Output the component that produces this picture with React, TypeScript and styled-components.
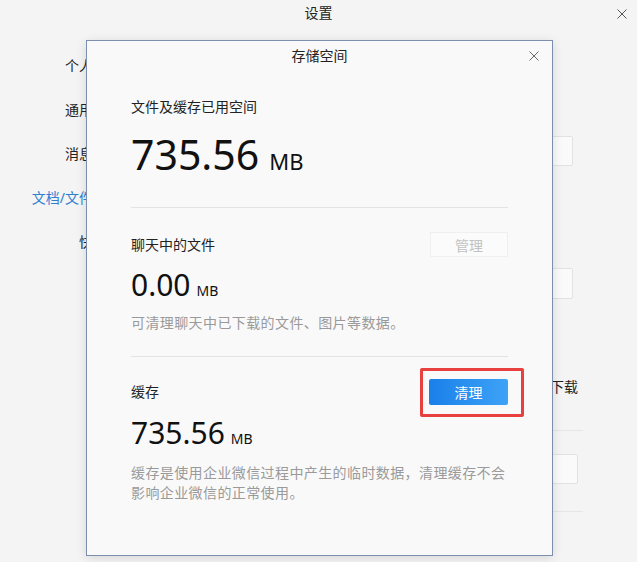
import styled, { createGlobalStyle } from "styled-components";

const GlobalStyle = createGlobalStyle`
  html, body {
    margin: 0;
    padding: 0;
    background: #f4f4f5;
  }
  body {
    font-family: "Noto Sans", "Noto Sans CJK SC", sans-serif;
    color: #222;
  }
`;

const Window = styled.div`
  position: relative;
  width: 637px;
  height: 562px;
  overflow: hidden;
  background: #f4f4f5;
  display: flex;
  flex-direction: column;
`;

const TitleBar = styled.div`
  position: relative;
  height: 27px;
  line-height: 26px;
  text-align: center;
  font-size: 14px;
  color: #222;
  flex-shrink: 0;
`;

const CloseButton = styled.span<{ $right: number }>`
  position: absolute;
  right: ${(p) => p.$right}px;
  top: 50%;
  width: 10px;
  height: 10px;
  margin-top: -5px;
  display: flex;
`;

const Body = styled.div`
  flex: 1;
  display: flex;
`;

const Nav = styled.ul`
  list-style: none;
  margin: 0;
  padding: 17px 0 0 0;
  width: 121px;
  flex-shrink: 0;
`;

const NavItem = styled.li<{ $active?: boolean }>`
  height: 44px;
  line-height: 44px;
  text-align: right;
  font-size: 14px;
  white-space: nowrap;
  color: ${(p) => (p.$active ? "#2f7fd0" : "#222")};
`;

const Main = styled.div`
  flex: 1;
  margin-right: 54px;
  display: flex;
  flex-direction: column;
`;

const SettingRow = styled.div<{ $top: number; $height: number; $inset: number }>`
  margin-top: ${(p) => p.$top}px;
  height: ${(p) => p.$height}px;
  padding-right: ${(p) => p.$inset}px;
  display: flex;
  align-items: center;
  justify-content: flex-end;
  font-size: 14px;
  color: #222;
`;

const OutlineButton = styled.span<{ $width: number }>`
  box-sizing: border-box;
  width: ${(p) => p.$width}px;
  height: 100%;
  border: 1px solid #e2e2e4;
  border-radius: 2px;
  background: #fafafa;
  display: flex;
  align-items: center;
  justify-content: center;
  font-size: 14px;
  color: #222;
`;

const LinkText = styled.span`
  color: #3b6fc2;
`;

const RowDivider = styled.div<{ $top: number }>`
  margin-top: ${(p) => p.$top}px;
  height: 1px;
  background: #e6e6e8;
`;

/* storage dialog */

const Modal = styled.div`
  position: absolute;
  left: 86px;
  top: 40px;
  width: 467px;
  height: 516px;
  box-sizing: border-box;
  border: 1px solid #7d8fae;
  background: #f9f9f9;
  box-shadow: 0 2px 10px rgba(0, 0, 0, 0.12);
  display: flex;
  flex-direction: column;
`;

const ModalHeader = styled.div`
  position: relative;
  height: 29px;
  line-height: 29px;
  text-align: center;
  font-size: 14px;
  color: #222;
`;

const ModalBody = styled.div`
  padding: 0 44px;
  display: flex;
  flex-direction: column;
`;

const Label = styled.div<{ $top?: number }>`
  margin-top: ${(p) => p.$top ?? 0}px;
  line-height: 20px;
  font-size: 14px;
  color: #222;
`;

const SectionHead = styled.div<{ $top: number; $height: number }>`
  margin-top: ${(p) => p.$top}px;
  height: ${(p) => p.$height}px;
  display: flex;
  align-items: center;
  justify-content: space-between;
`;

const Amount = styled.div<{ $size: number; $top: number }>`
  margin-top: ${(p) => p.$top}px;
  font-family: "Noto Sans", sans-serif;
  font-size: ${(p) => p.$size}px;
  line-height: ${(p) => p.$size}px;
  color: #111;
  white-space: nowrap;
`;

const Unit = styled.span<{ $size: number }>`
  font-size: ${(p) => p.$size}px;
  line-height: 1;
  margin-left: ${(p) => Math.round(p.$size * 0.45)}px;
`;

const Note = styled.div<{ $top: number }>`
  margin-top: ${(p) => p.$top}px;
  font-size: 14px;
  line-height: 20px;
  letter-spacing: 0.4px;
  color: #9a9a9a;
`;

const Divider = styled.div<{ $top: number }>`
  margin-top: ${(p) => p.$top}px;
  height: 1px;
  background: #e3e3e3;
`;

const GhostButton = styled.span`
  box-sizing: border-box;
  width: 78px;
  height: 25px;
  border: 1px solid #efefef;
  background: #fbfbfb;
  display: flex;
  align-items: center;
  justify-content: center;
  font-size: 14px;
  color: #c2c2c2;
`;

const ButtonWrap = styled.span`
  position: relative;
  display: flex;
`;

const PrimaryButton = styled.span`
  width: 79px;
  height: 26px;
  border-radius: 2px;
  background: linear-gradient(to right, #1a80ea, #3ea3f6);
  display: flex;
  align-items: center;
  justify-content: center;
  font-size: 14px;
  color: #fff;
`;

const Highlight = styled.span`
  position: absolute;
  left: -9px;
  right: -16px;
  top: -11px;
  bottom: -12px;
  border: 3px solid #e7403e;
  border-radius: 2px;
`;

const CloseIcon = ({ color }: { color: string }) => (
  <svg width="10" height="10" viewBox="0 0 10 10">
    <path d="M0.5 0.5 L9.5 9.5 M9.5 0.5 L0.5 9.5" stroke={color} strokeWidth="1" fill="none" />
  </svg>
);

const App = () => {
  return (
    <Window>
      <GlobalStyle />
      <TitleBar>
        设置
        <CloseButton $right={10}>
          <CloseIcon color="#555" />
        </CloseButton>
      </TitleBar>
      <Body>
        <Nav>
          <NavItem>个人信息</NavItem>
          <NavItem>通用设置</NavItem>
          <NavItem>消息通知</NavItem>
          <NavItem $active>文档/文件管理</NavItem>
          <NavItem>快捷键</NavItem>
        </Nav>
        <Main>
          <SettingRow $top={109} $height={30} $inset={10}>
            <OutlineButton $width={80}>
              <LinkText>更改</LinkText>
            </OutlineButton>
          </SettingRow>
          <SettingRow $top={102} $height={31} $inset={10}>
            <OutlineButton $width={80}>
              <LinkText>更改</LinkText>
            </OutlineButton>
          </SettingRow>
          <SettingRow $top={77} $height={20} $inset={5}>
            自动下载
          </SettingRow>
          <RowDivider $top={34} />
          <SettingRow $top={23} $height={30} $inset={5}>
            <OutlineButton $width={80}>清理</OutlineButton>
          </SettingRow>
          <RowDivider $top={27} />
        </Main>
      </Body>

      <Modal>
        <ModalHeader>
          存储空间
          <CloseButton $right={13}>
            <CloseIcon color="#666" />
          </CloseButton>
        </ModalHeader>
        <ModalBody>
          <Label $top={27}>文件及缓存已用空间</Label>
          <Amount $size={41} $top={17}>
            735.56<Unit $size={22}>MB</Unit>
          </Amount>
          <Divider $top={32} />

          <SectionHead $top={24} $height={25}>
            <Label>聊天中的文件</Label>
            <GhostButton>管理</GhostButton>
          </SectionHead>
          <Amount $size={30} $top={13}>
            0.00<Unit $size={14}>MB</Unit>
          </Amount>
          <Note $top={13}>可清理聊天中已下载的文件、图片等数据。</Note>
          <Divider $top={23} />

          <SectionHead $top={22} $height={26}>
            <Label>缓存</Label>
            <ButtonWrap>
              <PrimaryButton>清理</PrimaryButton>
              <Highlight />
            </ButtonWrap>
          </SectionHead>
          <Amount $size={30} $top={13}>
            735.56<Unit $size={14}>MB</Unit>
          </Amount>
          <Note $top={15}>
            缓存是使用企业微信过程中产生的临时数据，清理缓存不会
            <br />
            影响企业微信的正常使用。
          </Note>
        </ModalBody>
      </Modal>
    </Window>
  );
};

export default App;
